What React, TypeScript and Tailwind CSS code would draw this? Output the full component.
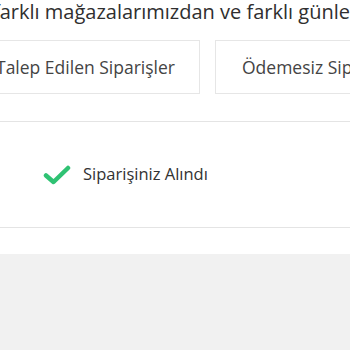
import React from 'react';

const CheckIcon: React.FC = () => (
  <svg width="28" height="20" viewBox="0 0 28 20" fill="none">
    <path d="M3 10.5 L10.5 17 L25 3" stroke="#2fc273" strokeWidth="4.5" strokeLinecap="round" strokeLinejoin="round" />
  </svg>
);

export default function App() {
  return (
    <div className="w-[350px] h-[350px] overflow-hidden bg-[#f1f1f1] font-['Open_Sans','Noto_Sans',sans-serif] text-[#333]">
      <div className="bg-white">
        {/* intro line + tabs */}
        <div className="pt-[0px] pb-[27px] border-b border-[#e4e4e4]">
          <p className="-ml-[7px] whitespace-nowrap text-[20px] leading-[23px] text-[#2f2f2f]">
            farklı mağazalarımızdan ve farklı günlerde
          </p>
          <div className="mt-[17px] -ml-[29px] flex gap-[15px] whitespace-nowrap">
            <div className="w-[229px] h-[54px] shrink-0 border border-[#e6e6e6] flex items-center justify-center text-[17.5px] text-[#444]">
              Talep Edilen Siparişler
            </div>
            <div className="w-[229px] h-[54px] shrink-0 border border-[#e6e6e6] flex items-center justify-start pl-[26px] text-[17.5px] text-[#444]">
              Ödemesiz Siparişler
            </div>
          </div>
        </div>

        {/* status row */}
        <div className="h-[106px] flex items-center gap-[12px] pl-[43px] border-b border-[#e4e4e4]">
          <CheckIcon />
          <span className="text-[16.5px] text-[#333]">Siparişiniz Alındı</span>
        </div>

        <div className="h-[26px]" />
      </div>
    </div>
  );
}
